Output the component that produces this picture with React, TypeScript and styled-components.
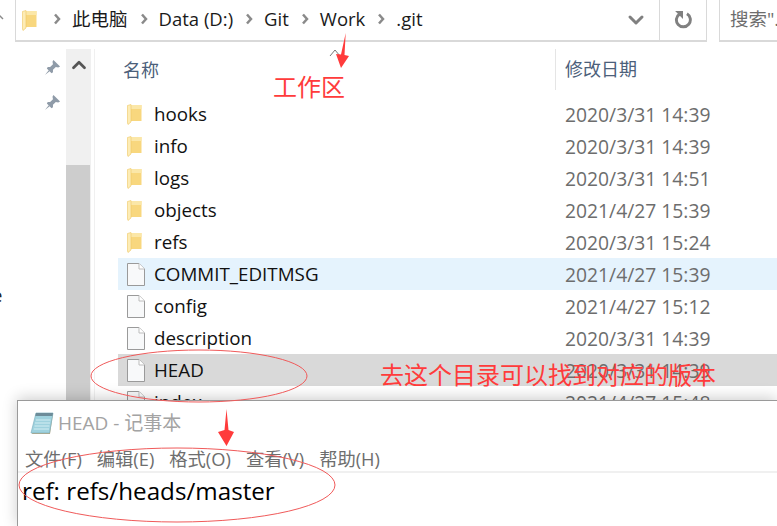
import React from 'react'
import styled, { createGlobalStyle } from 'styled-components'
import { ChevronDown, ChevronUp } from 'lucide-react'

const GlobalStyle = createGlobalStyle`
  html, body {
    margin: 0;
    padding: 0;
    background: #fff;
  }
  #root {
    width: 777px;
    height: 526px;
  }
`

const FONT = `"Open Sans", "Noto Sans CJK SC", sans-serif`

const Page = styled.div`
  position: relative;
  width: 777px;
  height: 526px;
  overflow: hidden;
  background: #fff;
  font-family: ${FONT};
`

const Explorer = styled.div`
  height: 400px;
  overflow: hidden;
  display: flex;
  flex-direction: column;
`

const TopBar = styled.div`
  display: flex;
  height: 42px;
  padding-left: 15px;
  flex: none;
`

const AddressBox = styled.div`
  width: 692px;
  box-sizing: border-box;
  display: flex;
  align-items: center;
  border: solid #d9d9d9;
  border-width: 0 1px 2px 1px;
  padding-left: 6px;
`

const Crumbs = styled.div`
  flex: 1;
  display: flex;
  align-items: center;
  height: 100%;
  box-sizing: border-box;
  padding-bottom: 2px;
  font-size: 18.5px;
  color: #1a1a1a;
`

const CrumbGap = styled.span`
  width: 16px;
  flex: none;
`

const Crumb = styled.span`
  margin-left: 11px;
  margin-right: 12px;
  padding-bottom: 2px;
  white-space: nowrap;
`

const Sep = styled.svg`
  flex: none;
  width: 8px;
  height: 12px;
`

const DropButton = styled.div`
  width: 46px;
  height: 100%;
  display: flex;
  align-items: center;
  justify-content: center;
  color: #808080;
`

const RefreshButton = styled.div`
  width: 46px;
  height: 100%;
  display: flex;
  align-items: center;
  justify-content: center;
  border-left: 1px solid #d9d9d9;
  color: #808080;
`

const SearchBox = styled.div`
  margin-left: 12px;
  flex: 1;
  border: solid #d9d9d9;
  border-width: 0 0 2px 1px;
  padding-left: 10px;
  font-size: 18.5px;
  line-height: 38px;
  color: #6d6d6d;
  white-space: nowrap;
  overflow: hidden;
`

const Body = styled.div`
  flex: 1;
  display: flex;
  min-height: 0;
  padding-top: 7px;
`

const Nav = styled.div`
  position: relative;
  width: 66px;
  flex: none;
  display: flex;
  flex-direction: column;
  align-items: flex-end;
  gap: 18px;
  padding: 10px 5px 0 0;
  box-sizing: border-box;
`

const ClippedLetter = styled.span`
  position: absolute;
  left: -8px;
  top: 233px;
  font-size: 18.5px;
  color: #222;
`

const Scrollbar = styled.div`
  width: 25px;
  flex: none;
  display: flex;
  flex-direction: column;
  background: #f0f0f0;
`

const ScrollArrow = styled.div`
  height: 42px;
  display: flex;
  justify-content: center;
  padding-top: 5px;
  box-sizing: border-box;
  color: #555;
`

const ScrollSpacer = styled.div`
  height: 74px;
`

const ScrollThumb = styled.div`
  flex: 1;
  margin-right: 1px;
  background: #cdcdcd;
`

const ListPane = styled.div`
  flex: 1;
  margin-left: 3px;
  border-left: 1px solid #f0f0f0;
  display: flex;
  flex-direction: column;
  min-width: 0;
`

const HeaderRow = styled.div`
  height: 41px;
  flex: none;
  display: flex;
  font-size: 18px;
  color: #4c607a;
`

const NameHead = styled.div`
  width: 460px;
  padding-left: 28px;
  box-sizing: border-box;
  line-height: 42px;
`

const DateHead = styled.div`
  border-left: 1px solid #e5e5e5;
  padding-left: 9px;
  line-height: 41px;
`

const Rows = styled.div`
  margin-top: 8px;
  margin-left: 23px;
  display: flex;
  flex-direction: column;
`

const Row = styled.div<{ $bg?: string }>`
  height: 32px;
  flex: none;
  display: flex;
  align-items: center;
  background: ${(p) => p.$bg ?? 'transparent'};
`

const IconCell = styled.div`
  width: 36px;
  padding-left: 9px;
  box-sizing: border-box;
  flex: none;
  display: flex;
  align-items: center;
`

const FileName = styled.div`
  width: 411px;
  flex: none;
  font-size: 18.8px;
  color: #111;
  white-space: nowrap;
`

const FileDate = styled.div`
  font-size: 19.3px;
  color: #6d6d6d;
  white-space: nowrap;
`

const Notepad = styled.div`
  position: relative;
  margin-left: 17px;
  height: 126px;
  background: #fff;
  border: solid #9a9a9a;
  border-width: 1px 0 0 1px;
  box-shadow: 0 -2px 14px rgba(0, 0, 0, 0.2);
  display: flex;
  flex-direction: column;
`

const TitleBar = styled.div`
  height: 44px;
  flex: none;
  display: flex;
  align-items: center;
  padding-left: 12px;
  gap: 4px;
  font-size: 19px;
  color: #a3a3a3;
`

const TitleText = styled.span`
  padding-bottom: 3px;
`

const MenuBar = styled.div`
  height: 28px;
  flex: none;
  box-sizing: border-box;
  padding: 0 0 1px 7px;
  display: flex;
  gap: 15px;
  align-items: center;
  font-size: 18.3px;
  color: #6e6e6e;
  border-bottom: 2px solid #f0f0f0;
  white-space: nowrap;
`

const Editor = styled.div`
  padding: 2px 0 0 4px;
  font-size: 24.2px;
  line-height: 32px;
  color: #000;
`

const Overlay = styled.svg`
  position: absolute;
  left: 0;
  top: 0;
  width: 777px;
  height: 526px;
  pointer-events: none;
`

const Note = styled.div<{ $x: number; $y: number; $size: number }>`
  position: absolute;
  left: ${(p) => p.$x}px;
  top: ${(p) => p.$y}px;
  font-size: ${(p) => p.$size}px;
  line-height: 1;
  color: #ff3b3b;
  white-space: nowrap;
  font-family: "Noto Sans CJK SC", sans-serif;
`

const FolderIcon = () => (
  <svg width="15" height="21" viewBox="0 0 15 21">
    <path d="M3 1 H14.5 V17 H3 Z" fill="#f8d77e" />
    <path d="M3 1 H14.5 V5 H3 Z" fill="#fbe7a8" />
    <path d="M0.5 1.500 L4 0.500 V18 L1 20.500 L0.500 19 Z" fill="#fdecb5" stroke="#eec763" strokeWidth="0.6" />
  </svg>
)

const FileIcon = () => (
  <svg width="18" height="23" viewBox="0 0 18 23">
    <path d="M0.5 0.5 H12 L17.5 6 V22.5 H0.5 Z" fill="#f8f9fa" stroke="#9a9a9a" />
    <path d="M12 0.5 V6 H17.5" fill="#fff" stroke="#bdbdbd" />
  </svg>
)

const PinIcon = () => (
  <svg width="17" height="17" viewBox="0 0 18 18">
    <path d="M10 1 L17 8 L15 9 L12.5 8.5 L9.5 11.5 L9.5 14 L8 15 L3 10 L4 8.5 L6.5 8.5 L9.5 5.5 L9 3 Z" fill="#8f9ba8" />
    <path d="M5 12 L1 17 L6 13 Z" fill="#8f9ba8" />
  </svg>
)

const RefreshIcon = () => (
  <svg width="18" height="18" viewBox="0 0 16 16">
    <path d="M11.500 2.500 A6.200 6.200 0 1 1 5 2.600" fill="none" stroke="currentColor" strokeWidth="2.600" />
    <path d="M1 0 H8 V7 Z" fill="currentColor" />
  </svg>
)

const NotepadIcon = () => (
  <svg width="24" height="24" viewBox="0 0 24 24">
    <path d="M6 3 H23 L20 23 H2 Z" fill="#b8a57c" />
    <path d="M6 2 H23 L19.500 22 H1 Z" fill="#9fd2de" stroke="#7fb2c2" strokeWidth="0.7" />
    <path d="M6 2 H23 L22.400 5 H5.300 Z" fill="#6d8c99" />
    <path d="M6 9 H20.500 M5 12 H20 M4.500 15 H19.400 M3.800 18 H19" stroke="#d3eef3" strokeWidth="1" />
  </svg>
)

const CrumbSep = () => (
  <Sep viewBox="0 0 8 12">
    <path d="M2 1.500 L6 6 L2 10.500" fill="none" stroke="#8a8a8a" strokeWidth="2.500" />
  </Sep>
)

const crumbs = ['此电脑', 'Data (D:)', 'Git', 'Work']

const files = [
  { name: 'hooks', date: '2020/3/31 14:39', folder: true },
  { name: 'info', date: '2020/3/31 14:39', folder: true },
  { name: 'logs', date: '2020/3/31 14:51', folder: true },
  { name: 'objects', date: '2021/4/27 15:39', folder: true },
  { name: 'refs', date: '2020/3/31 15:24', folder: true },
  { name: 'COMMIT_EDITMSG', date: '2021/4/27 15:39', bg: '#e5f3fd' },
  { name: 'config', date: '2021/4/27 15:12' },
  { name: 'description', date: '2020/3/31 14:39' },
  { name: 'HEAD', date: '2020/3/31 14:39', bg: '#d9d9d9' },
  { name: 'index', date: '2021/4/27 15:48' },
]

const menus = ['文件(F)', '编辑(E)', '格式(O)', '查看(V)', '帮助(H)']

export default function App() {
  return (
    <Page>
      <GlobalStyle />
      <Explorer>
        <TopBar>
          <AddressBox>
            <FolderIcon />
            <Crumbs>
              <CrumbGap />
              {crumbs.map((c) => (
                <React.Fragment key={c}>
                  <CrumbSep />
                  <Crumb>{c}</Crumb>
                </React.Fragment>
              ))}
              <CrumbSep />
              <Crumb>.git</Crumb>
            </Crumbs>
            <DropButton>
              <ChevronDown size={24} strokeWidth={3} />
            </DropButton>
            <RefreshButton>
              <RefreshIcon />
            </RefreshButton>
          </AddressBox>
          <SearchBox>搜索".git"</SearchBox>
        </TopBar>
        <Body>
          <Nav>
            <PinIcon />
            <PinIcon />
            <ClippedLetter>e</ClippedLetter>
          </Nav>
          <Scrollbar>
            <ScrollArrow>
              <ChevronUp size={22} strokeWidth={3} />
            </ScrollArrow>
            <ScrollSpacer />
            <ScrollThumb />
          </Scrollbar>
          <ListPane>
            <HeaderRow>
              <NameHead>名称</NameHead>
              <DateHead>修改日期</DateHead>
            </HeaderRow>
            <Rows>
              {files.map((f) => (
                <Row key={f.name} $bg={f.bg}>
                  <IconCell>{f.folder ? <FolderIcon /> : <FileIcon />}</IconCell>
                  <FileName>{f.name}</FileName>
                  <FileDate>{f.date}</FileDate>
                </Row>
              ))}
            </Rows>
          </ListPane>
        </Body>
      </Explorer>
      <Notepad>
        <TitleBar>
          <NotepadIcon />
          <TitleText>HEAD - 记事本</TitleText>
        </TitleBar>
        <MenuBar>
          {menus.map((m) => (
            <span key={m}>{m}</span>
          ))}
        </MenuBar>
        <Editor>ref: refs/heads/master</Editor>
      </Notepad>
      <Overlay viewBox="0 0 777 526">
        <path d="M-2 14 L3 19" fill="none" stroke="#8a8a8a" strokeWidth="1.500" />
        <path d="M330 56 L335 50 L340 56" fill="none" stroke="#777" strokeWidth="1" />
        <path d="M345.700 33 L344.500 55 L349 56 L341 68 L336 54 L341 54.500 Z" fill="#ff3b3b" />
        <path d="M226.500 409 L228.500 430 L234 432 L226.500 446 L218 432 L224.500 430 Z" fill="#ff3b3b" />
        <ellipse cx="199" cy="376" rx="108" ry="26" fill="none" stroke="#f05a5a" strokeWidth="1" />
        <ellipse cx="177" cy="485" rx="158" ry="37" fill="none" stroke="#f05a5a" strokeWidth="1" />
      </Overlay>
      <Note $x={273} $y={74} $size={24}>工作区</Note>
      <Note $x={380} $y={362} $size={24}>去这个目录可以找到对应的版本</Note>
    </Page>
  )
}
